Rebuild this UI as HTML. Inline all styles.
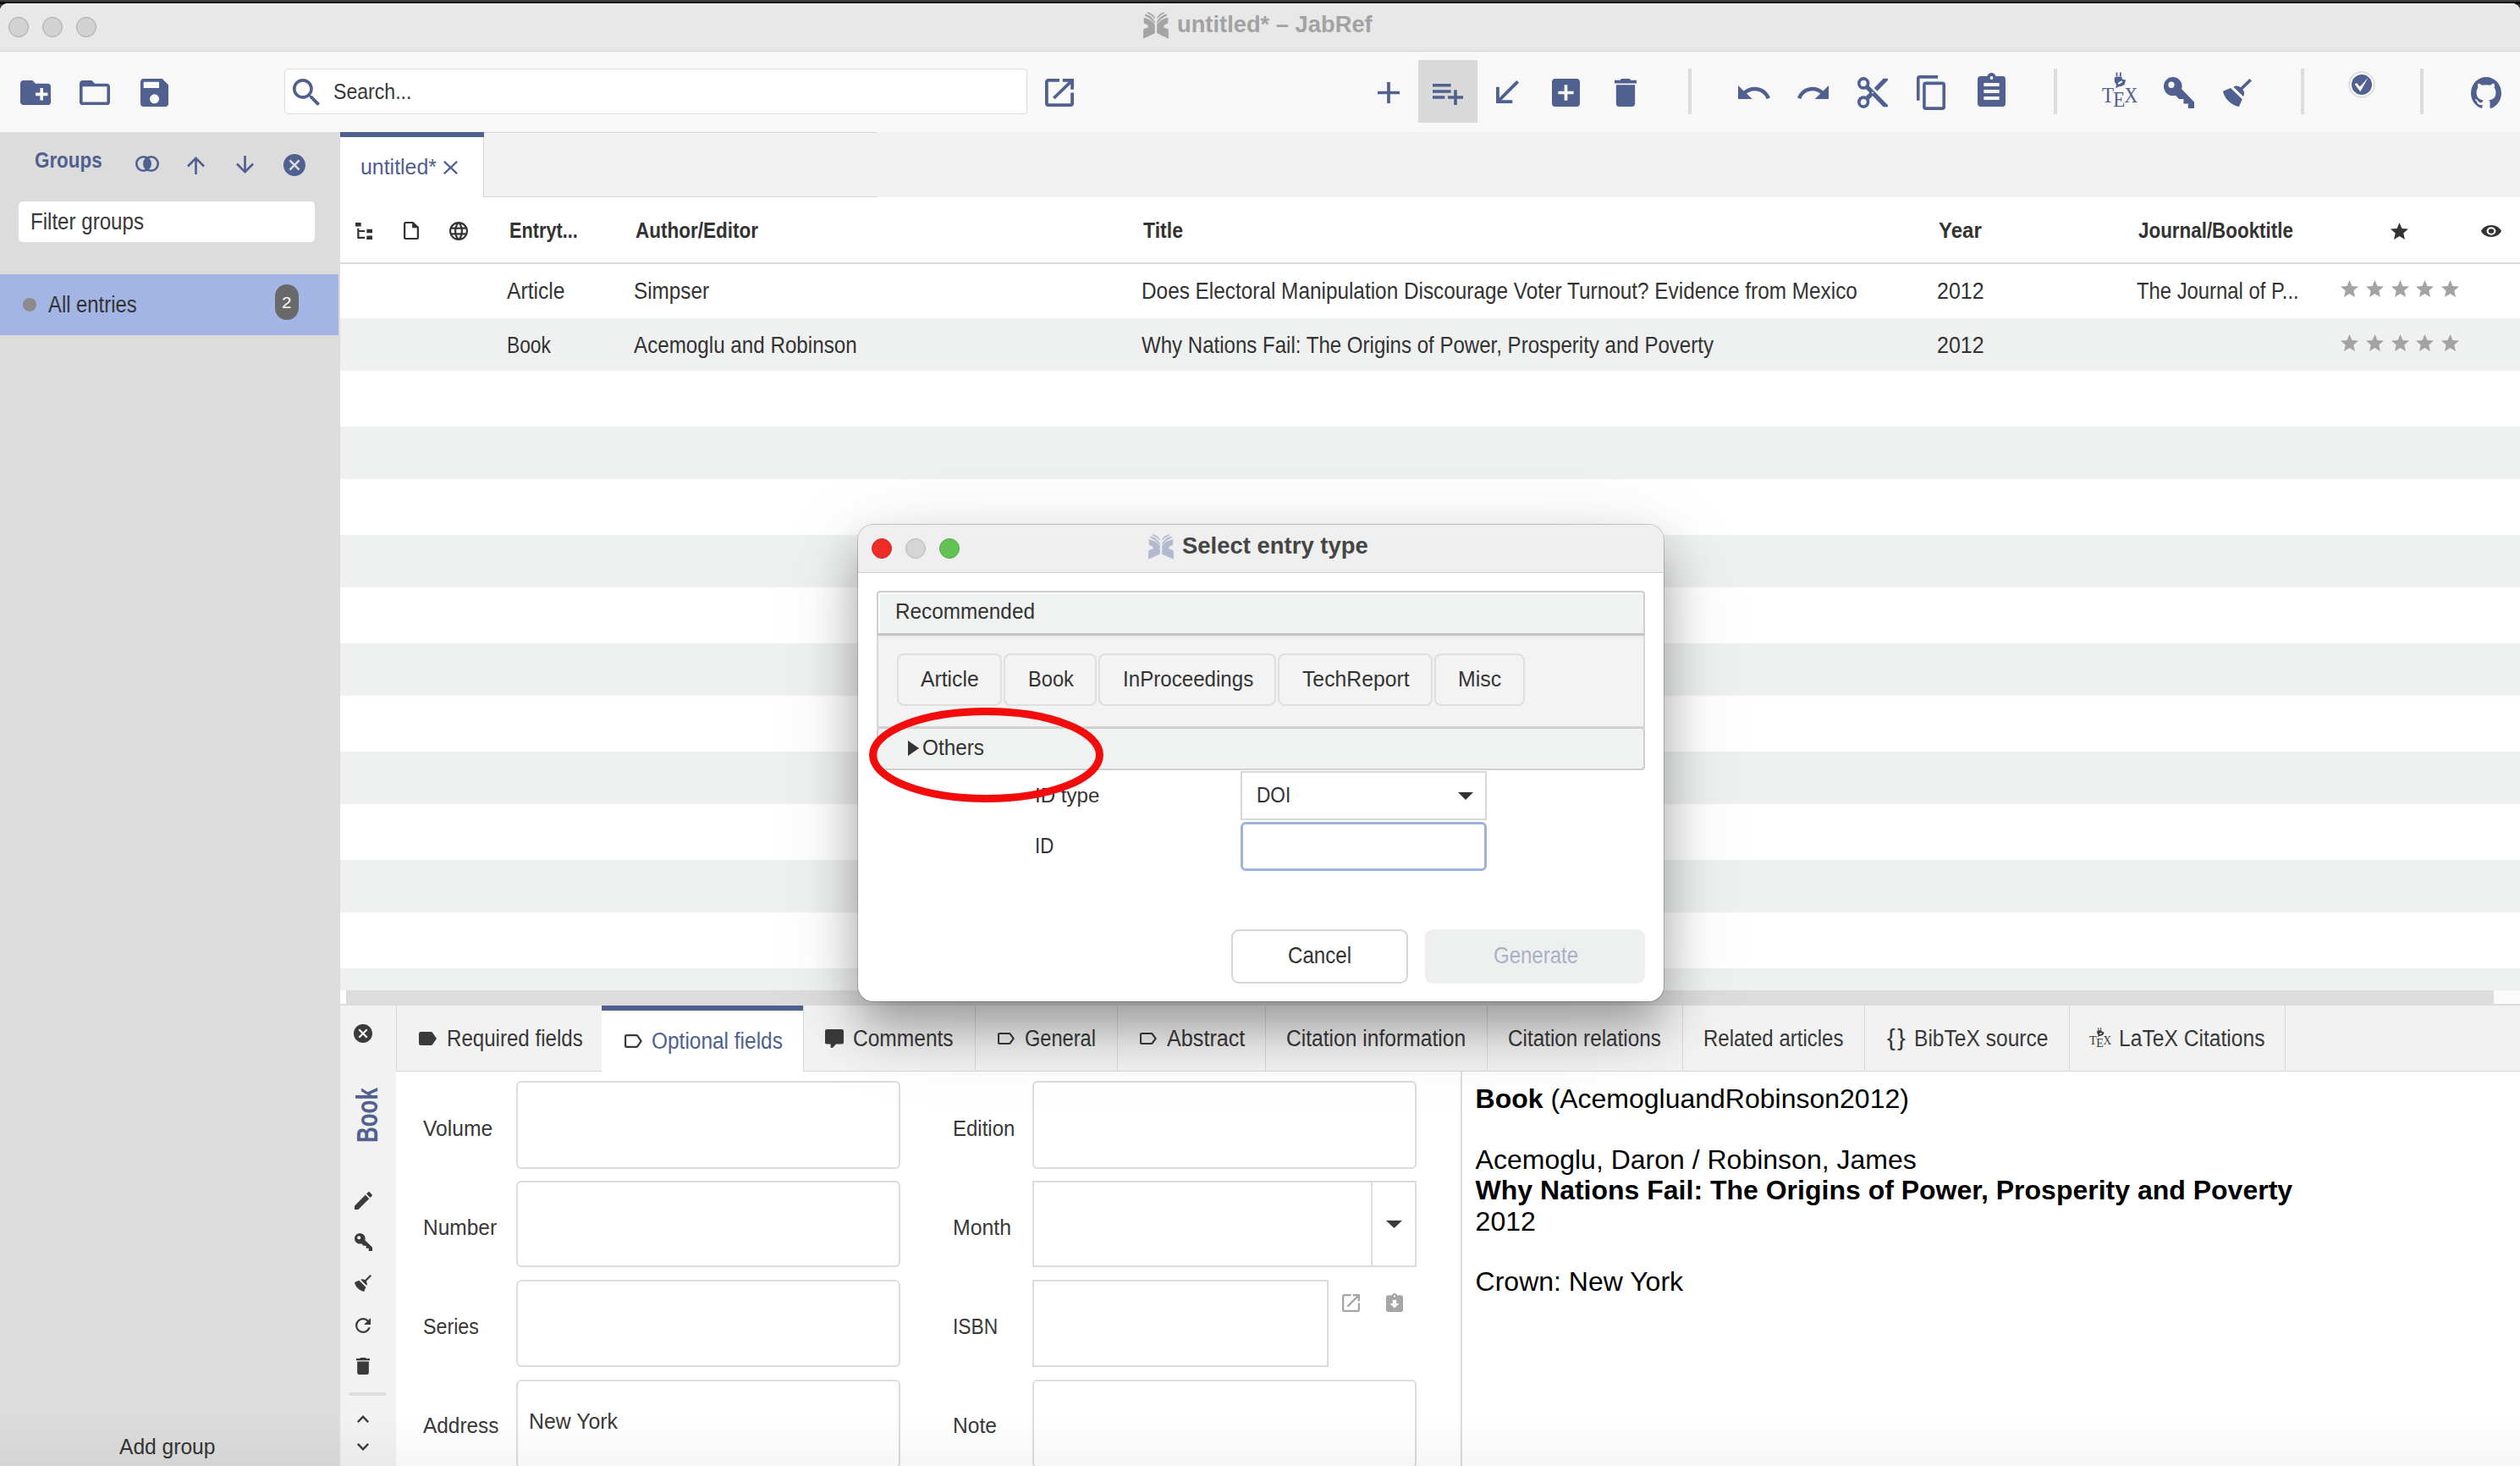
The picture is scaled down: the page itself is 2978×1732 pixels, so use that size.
<!DOCTYPE html>
<html><head><meta charset="utf-8">
<style>
*{box-sizing:border-box;margin:0;padding:0}
html,body{width:2978px;height:1732px;overflow:hidden;background:#3a3a3a;font-family:"Liberation Sans",sans-serif;color:#333}
.a{position:absolute}
.ic{position:absolute;overflow:visible}
.t{position:absolute;white-space:nowrap;line-height:1}
</style></head><body>

<div class="a" style="left:0px;top:0px;width:2978px;height:2px;background:#3d3d3d"></div>
<div class="a" style="left:0px;top:2px;width:2978px;height:3px;background:#0a0a0a"></div>
<div class="a" style="left:0px;top:4px;width:2978px;height:1728px;background:#f8f8f8;border-radius:9px 9px 0 0"></div>
<div class="a" style="left:0px;top:4px;width:2978px;height:56px;background:#e8e8e8;border-radius:9px 9px 0 0;border-top:1px solid #fdfdfd"></div>
<div class="a" style="left:0px;top:60px;width:2978px;height:1px;background:#d3d3d3"></div>
<div class="a" style="left:10px;top:20px;width:24px;height:24px;border-radius:50%;background:#d2d2d2;border:1px solid #a6a6a6"></div>
<div class="a" style="left:50px;top:20px;width:24px;height:24px;border-radius:50%;background:#d2d2d2;border:1px solid #a6a6a6"></div>
<div class="a" style="left:90px;top:20px;width:24px;height:24px;border-radius:50%;background:#d2d2d2;border:1px solid #a6a6a6"></div>
<svg class="ic" style="left:1351px;top:14px;width:30px;height:32px" viewBox="0 0 100 100" preserveAspectRatio="none"><g fill="#a4a4a4"><path d="M2,21 Q30,25 46,47 L46,79 L0,99 L1,63 L19,58 Q22,47 3,43 Z"/><path d="M8,8 Q32,13 46,36 L46,44 Q30,22 7,15 Z"/><path d="M16,1 Q36,5 46,20 L46,26 Q33,11 16,5 Z"/><g transform="translate(100,0) scale(-1,1)"><path d="M2,21 Q30,25 46,47 L46,79 L0,99 L1,63 L19,58 Q22,47 3,43 Z"/><path d="M8,8 Q32,13 46,36 L46,44 Q30,22 7,15 Z"/><path d="M16,1 Q36,5 46,20 L46,26 Q33,11 16,5 Z"/></g></g></svg>
<div class="t" style="left:1391.2px;top:14.0px;font-size:28.26px;color:#a2a2a2;font-weight:bold;transform:scaleX(0.9668);transform-origin:0 0;">untitled* – JabRef</div>
<svg class="ic" style="left:24px;top:95px;width:36px;height:29px" viewBox="2 4 20 16" preserveAspectRatio="none"><path fill="#50608f" d="M10,4L12,6H20A2,2 0 0,1 22,8V18A2,2 0 0,1 20,20H4C2.89,20 2,19.1 2,18V6C2,4.89 2.89,4 4,4H10M15,9V12H12V14H15V17H17V14H20V12H17V9H15Z"/></svg>
<svg class="ic" style="left:94px;top:95px;width:36px;height:29px" viewBox="2 4 20 16" preserveAspectRatio="none"><path fill="#50608f" d="M20,18H4V8H20M20,6H12L10,4H4C2.89,4 2,4.89 2,6V18A2,2 0 0,0 4,20H20A2,2 0 0,0 22,18V8C22,6.89 21.1,6 20,6Z"/></svg>
<svg class="ic" style="left:166px;top:93px;width:33px;height:33px" viewBox="3 3 18 18" preserveAspectRatio="none"><path fill="#50608f" d="M15,9H5V5H15M12,19A3,3 0 0,1 9,16A3,3 0 0,1 12,13A3,3 0 0,1 15,16A3,3 0 0,1 12,19M17,3H5C3.89,3 3,3.9 3,5V19A2,2 0 0,0 5,21H19A2,2 0 0,0 21,19V7L17,3Z"/></svg>
<div class="a" style="left:336px;top:81px;width:878px;height:54px;background:#fff;border:1.5px solid #dadada;border-radius:5px"></div>
<svg class="ic" style="left:346px;top:93px;width:32px;height:32px" viewBox="3 3 17.5 17.5" preserveAspectRatio="none"><path fill="#50608f" d="M9.5,3A6.5,6.5 0 0,1 16,9.5C16,11.11 15.41,12.59 14.44,13.73L14.71,14H15.5L20.5,19L19,20.5L14,15.5V14.71L13.73,14.44C12.59,15.41 11.11,16 9.5,16A6.5,6.5 0 0,1 3,9.5A6.5,6.5 0 0,1 9.5,3M9.5,5C7,5 5,7 5,9.5C5,12 7,14 9.5,14C12,14 14,12 14,9.5C14,7 12,5 9.5,5Z"/></svg>
<div class="t" style="left:394.0px;top:94.6px;font-size:26.23px;color:#383838;transform:scaleX(0.8810);transform-origin:0 0;">Search...</div>
<svg class="ic" style="left:1235px;top:93px;width:34px;height:33px" viewBox="3 3 18 18" preserveAspectRatio="none"><path fill="#50608f" d="M14,3V5H17.59L7.76,14.83L9.17,16.24L19,6.41V10H21V3M19,19H5V5H12V3H5C3.89,3 3,3.9 3,5V19A2,2 0 0,0 5,21H19A2,2 0 0,0 21,19V12H19V19Z"/></svg>
<svg class="ic" style="left:1628px;top:97px;width:26px;height:25px" viewBox="5 5 14 14" preserveAspectRatio="none"><path fill="#50608f" d="M19,13H13V19H11V13H5V11H11V5H13V11H19V13Z"/></svg>
<div class="a" style="left:1676px;top:71px;width:70px;height:74px;background:#d9d9d9"></div>
<svg class="ic" style="left:1693px;top:99px;width:36px;height:25px" viewBox="2 6 20 14" preserveAspectRatio="none"><path fill="#50608f" d="M2,16H10V14H2M18,14V10H16V14H12V16H16V20H18V16H22V14M14,6H2V8H14M14,10H2V12H14V10Z"/></svg>
<svg class="ic" style="left:1768px;top:95px;width:27px;height:27px" viewBox="5 5 14 14" preserveAspectRatio="none"><path fill="#50608f" d="M19,6.41L17.59,5L7,15.59V9H5V19H15V17H8.41L19,6.41Z"/></svg>
<svg class="ic" style="left:1834px;top:93px;width:33px;height:33px" viewBox="3 3 18 18" preserveAspectRatio="none"><path fill="#50608f" d="M17,13H13V17H11V13H7V11H11V7H13V11H17M19,3H5C3.89,3 3,3.89 3,5V19A2,2 0 0,0 5,21H19A2,2 0 0,0 21,19V5C21,3.89 20.1,3 19,3Z"/></svg>
<svg class="ic" style="left:1908px;top:93px;width:26px;height:33px" viewBox="5 3 14 18" preserveAspectRatio="none"><path fill="#50608f" d="M19,4H15.5L14.5,3H9.5L8.5,4H5V6H19M6,19A2,2 0 0,0 8,21H16A2,2 0 0,0 18,19V7H6V19Z"/></svg>
<div class="a" style="left:1995px;top:81px;width:4px;height:54px;background:#dcdcdc"></div>
<div class="a" style="left:2427px;top:81px;width:4px;height:54px;background:#dcdcdc"></div>
<div class="a" style="left:2719px;top:81px;width:4px;height:54px;background:#dcdcdc"></div>
<div class="a" style="left:2860px;top:81px;width:4px;height:54px;background:#dcdcdc"></div>
<svg class="ic" style="left:2054px;top:101px;width:38px;height:16px" viewBox="2 7 20.47 9" preserveAspectRatio="none"><path fill="#50608f" d="M12.5,8C9.85,8 7.45,9 5.6,10.6L2,7V16H11L7.38,12.38C8.77,11.22 10.54,10.5 12.5,10.5C16.04,10.5 19.05,12.81 20.1,16L22.47,15.22C21.08,11.03 17.15,8 12.5,8Z"/></svg>
<svg class="ic" style="left:2124px;top:101px;width:37px;height:16px" viewBox="1.54 7 20.46 9" preserveAspectRatio="none"><path fill="#50608f" d="M18.4,10.6C16.55,9 14.15,8 11.5,8C6.85,8 2.92,11.03 1.54,15.22L3.9,16C4.95,12.81 7.95,10.5 11.5,10.5C13.45,10.5 15.23,11.22 16.62,12.38L13,16H22V7L18.4,10.6Z"/></svg>
<svg class="ic" style="left:2195px;top:91px;width:36px;height:37px" viewBox="2 2 20 20" preserveAspectRatio="none"><path fill="#50608f" d="M19,3L13,9L15,11L22,4V3M12,12.5A0.5,0.5 0 0,1 11.5,12A0.5,0.5 0 0,1 12,11.5A0.5,0.5 0 0,1 12.5,12A0.5,0.5 0 0,1 12,12.5M6,20A2,2 0 0,1 4,18C4,16.89 4.9,16 6,16A2,2 0 0,1 8,18C8,19.11 7.1,20 6,20M6,8A2,2 0 0,1 4,6C4,4.89 4.9,4 6,4A2,2 0 0,1 8,6C8,7.11 7.1,8 6,8M9.64,7.64C9.87,7.14 10,6.590 10,6A4,4 0 0,0 6,2A4,4 0 0,0 2,6A4,4 0 0,0 6,10C6.59,10 7.14,9.87 7.64,9.64L10,12L7.64,14.36C7.14,14.13 6.59,14 6,14A4,4 0 0,0 2,18A4,4 0 0,0 6,22A4,4 0 0,0 10,18C10,17.41 9.87,16.86 9.64,16.36L12,14L19,21H22V20L9.64,7.64Z"/></svg>
<svg class="ic" style="left:2265px;top:89px;width:34px;height:41px" viewBox="2 1 19 22" preserveAspectRatio="none"><path fill="#50608f" d="M19,21H8V7H19M19,5H8A2,2 0 0,0 6,7V21A2,2 0 0,0 8,23H19A2,2 0 0,0 21,21V7A2,2 0 0,0 19,5M16,1H4A2,2 0 0,0 2,3V17H4V3H16V1Z"/></svg>
<svg class="ic" style="left:2337px;top:86px;width:33px;height:40px" viewBox="3 1 18 20" preserveAspectRatio="none"><path fill="#50608f" d="M17,9H7V7H17M17,13H7V11H17M17,17H7V15H17M12,3A1,1 0 0,1 13,4A1,1 0 0,1 12,5A1,1 0 0,1 11,4A1,1 0 0,1 12,3M19,3H14.82C14.4,1.84 13.3,1 12,1C10.7,1 9.6,1.84 9.18,3H5A2,2 0 0,0 3,5V19A2,2 0 0,0 5,21H19A2,2 0 0,0 21,19V5A2,2 0 0,0 19,3Z"/></svg>
<svg class="ic" style="left:2484px;top:85px;width:42px;height:42px" viewBox="0 0 43 42" preserveAspectRatio="none"><g fill="#50608f"><path fill-rule="evenodd" d="M17,0.5H18.8V5H17Z M21.5,0.5H23.3V5H21.5Z M15,8.5 Q15,5.5 18,5.5 L23.5,5.5 Q24.5,6.5 24.5,8.5 L28.8,9.5 L27.3,15 Q24,17.2 20,17.6 L16.8,19.2 L17.3,15 Q14.6,12 15,8.5 Z M19.3,14.2 Q21,15.2 24,12.5 Q25.5,10.8 24.5,10.5 Q22.5,10.2 20.3,12.3 Q18.6,13.9 19.3,14.2Z"/><text x="0" y="35.8" font-family="Liberation Serif" font-size="25.5" textLength="14.5" lengthAdjust="spacingAndGlyphs">T</text><text x="13.6" y="41" font-family="Liberation Serif" font-size="25.5" textLength="14.3" lengthAdjust="spacingAndGlyphs">E</text><text x="27.2" y="35.8" font-family="Liberation Serif" font-size="25.5" textLength="16" lengthAdjust="spacingAndGlyphs">X</text></g></svg>
<svg class="ic" style="left:2557px;top:91px;width:36px;height:37px" viewBox="2 2 20 20" preserveAspectRatio="none"><path fill="#50608f" d="M22,18V22H18V19H15V16H12L9.74,13.74C9.19,13.91 8.61,14 8,14A6,6 0 0,1 2,8A6,6 0 0,1 8,2A6,6 0 0,1 14,8C14,8.61 13.910,9.19 13.74,9.74L22,18M7,5A2,2 0 0,0 5,7A2,2 0 0,0 7,9A2,2 0 0,0 9,7A2,2 0 0,0 7,5Z"/></svg>
<svg class="ic" style="left:2627px;top:93px;width:34px;height:33px" viewBox="2.35 2.72 18.43 18.43" preserveAspectRatio="none"><path fill="#50608f" d="M19.36,2.72L20.78,4.14L15.06,9.85C16.13,11.39 16.28,13.24 15.38,14.44L9.06,8.12C10.26,7.22 12.11,7.37 13.65,8.44L19.36,2.72M5.93,17.57C3.92,15.56 2.69,13.16 2.35,10.92L7.23,8.83L14.67,16.27L12.58,21.15C10.34,20.81 7.94,19.58 5.93,17.57Z"/></svg>
<svg class="ic" style="left:2775px;top:84px;width:32px;height:32px" viewBox="0 0 32 32"><circle cx="16" cy="16" r="14.8" fill="#fff" stroke="#e0e0e0" stroke-width="2.2"/><circle cx="16" cy="16" r="12" fill="#50608f"/><path fill="#fff" d="M7.6,15.6 L10.1,13.9 L13.7,18.4 L23.4,8.1 Q20,14 14.3,24.3 Z"/></svg>
<svg class="ic" style="left:2920px;top:91px;width:36px;height:37px" viewBox="2 2 20 19.6" preserveAspectRatio="none"><path fill="#50608f" d="M12,2A10,10 0 0,0 2,12C2,16.42 4.87,20.17 8.84,21.5C9.34,21.58 9.5,21.27 9.5,21C9.5,20.77 9.5,20.14 9.5,19.31C6.73,19.91 6.14,17.97 6.14,17.97C5.68,16.81 5.03,16.5 5.03,16.5C4.12,15.88 5.1,15.9 5.1,15.9C6.1,15.97 6.63,16.930 6.63,16.93C7.5,18.45 8.97,18 9.54,17.76C9.63,17.11 9.89,16.67 10.17,16.42C7.95,16.17 5.64,15.31 5.64,11.5C5.64,10.39 6,9.5 6.65,8.79C6.55,8.54 6.2,7.5 6.75,6.15C6.75,6.15 7.59,5.88 9.5,7.17C10.29,6.95 11.15,6.84 12,6.84C12.85,6.84 13.71,6.95 14.5,7.17C16.41,5.88 17.25,6.15 17.25,6.15C17.8,7.5 17.45,8.54 17.35,8.79C18,9.5 18.36,10.39 18.36,11.5C18.36,15.32 16.04,16.16 13.81,16.41C14.17,16.72 14.5,17.33 14.5,18.26C14.5,19.6 14.5,20.68 14.5,21.090C14.5,21.36 14.66,21.68 15.17,21.58C19.14,20.24 22,16.42 22,12A10,10 0 0,0 12,2Z"/></svg>
<div class="a" style="left:0px;top:156px;width:402px;height:1576px;background:#dcdcdc"></div>
<div class="t" style="left:41.4px;top:176.1px;font-size:26.09px;color:#50608f;font-weight:bold;transform:scaleX(0.8583);transform-origin:0 0;">Groups</div>
<svg class="ic" style="left:160px;top:183px;width:28px;height:21px" viewBox="0 0 28 21"><g fill="none" stroke="#50608f" stroke-width="2.6"><circle cx="9.5" cy="10.5" r="8.2"/><circle cx="18.5" cy="10.5" r="8.2"/></g><path fill="#50608f" d="M14,3.6 A8.2,8.2 0 0 1 14,17.4 A8.2,8.2 0 0 1 14,3.6Z"/></svg>
<svg class="ic" style="left:221px;top:185px;width:21px;height:21px" viewBox="4.08 4.16 15.840000000000002 15.84" preserveAspectRatio="none"><path fill="#50608f" d="M13,20H11V8L5.5,13.5L4.08,12.08L12,4.16L19.92,12.08L18.5,13.5L13,8V20Z"/></svg>
<svg class="ic" style="left:279px;top:184px;width:21px;height:21px" viewBox="4.08 4 15.840000000000002 15.84" preserveAspectRatio="none"><path fill="#50608f" d="M11,4H13V16L18.5,10.5L19.92,11.92L12,19.84L4.08,11.92L5.5,10.5L11,16V4Z"/></svg>
<svg class="ic" style="left:335px;top:182px;width:26px;height:26px" viewBox="2 2 20 20" preserveAspectRatio="none"><path fill="#50608f" d="M12,2C17.53,2 22,6.47 22,12C22,17.53 17.53,22 12,22C6.47,22 2,17.53 2,12C2,6.47 6.47,2 12,2M15.59,7L12,10.59L8.41,7L7,8.41L10.59,12L7,15.59L8.41,17L12,13.41L15.59,17L17,15.59L13.410,12L17,8.41L15.59,7Z"/></svg>
<div class="a" style="left:22px;top:238px;width:350px;height:48px;background:#fff;border-radius:5px"></div>
<div class="t" style="left:36.0px;top:248.0px;font-size:27.39px;color:#383838;transform:scaleX(0.8803);transform-origin:0 0;">Filter groups</div>
<div class="a" style="left:0px;top:324px;width:400px;height:72px;background:#a3b5e5"></div>
<div class="a" style="left:27px;top:352px;width:16px;height:16px;border-radius:50%;background:#8c8a8c"></div>
<div class="t" style="left:57.3px;top:346.1px;font-size:27.39px;color:#333;transform:scaleX(0.8707);transform-origin:0 0;">All entries</div>
<div class="a" style="left:325px;top:336px;width:28px;height:42px;border-radius:14px;background:#696969"></div>
<div class="t" style="left:333.0px;top:349.1px;font-size:18.12px;color:#fff;transform:scaleX(1.1438);transform-origin:0 0;">2</div>
<div class="t" style="left:140.9px;top:1696.2px;font-size:26.67px;color:#333;transform:scaleX(0.9223);transform-origin:0 0;">Add group</div>
<div class="a" style="left:402px;top:156px;width:2576px;height:77px;background:#f2f2f2"></div>
<div class="a" style="left:402px;top:156px;width:634px;height:1px;background:#d6d6d6"></div>
<div class="a" style="left:402px;top:232px;width:634px;height:1px;background:#d6d6d6"></div>
<div class="a" style="left:402px;top:156px;width:170px;height:77px;background:#fff;border-right:1px solid #d6d6d6"></div>
<div class="a" style="left:402px;top:156px;width:170px;height:6px;background:#50608f"></div>
<div class="t" style="left:426.0px;top:185.3px;font-size:25.50px;color:#50608f;transform:scaleX(0.9763);transform-origin:0 0;">untitled*</div>
<svg class="ic" style="left:524px;top:190px;width:17px;height:16px" viewBox="5 5 14 14" preserveAspectRatio="none"><path fill="#50608f" d="M19,6.41L17.59,5L12,10.59L6.41,5L5,6.41L10.59,12L5,17.59L6.41,19L12,13.41L17.59,19L19,17.59L13.41,12L19,6.41Z"/></svg>
<div class="a" style="left:402px;top:233px;width:2576px;height:937px;background:#fff"></div>
<div class="a" style="left:402px;top:310px;width:2576px;height:2px;background:#dadada"></div>
<div class="a" style="left:402px;top:376px;width:2576px;height:62px;background:#eff0f0"></div>
<div class="a" style="left:402px;top:504px;width:2576px;height:62px;background:#eff0f0"></div>
<div class="a" style="left:402px;top:632px;width:2576px;height:62px;background:#eff0f0"></div>
<div class="a" style="left:402px;top:760px;width:2576px;height:62px;background:#eff0f0"></div>
<div class="a" style="left:402px;top:888px;width:2576px;height:62px;background:#eff0f0"></div>
<div class="a" style="left:402px;top:1016px;width:2576px;height:62px;background:#eff0f0"></div>
<div class="a" style="left:402px;top:1144px;width:2576px;height:26px;background:#eff0f0"></div>
<svg class="ic" style="left:420px;top:263px;width:20px;height:20px" viewBox="3 3 18 18" preserveAspectRatio="none"><path fill="#333" d="M3,3H9V7H3V3M15,10H21V14H15V10M15,17H21V21H15V17M13,13H7V18H13V20H7L5,20V9H7V11H13V13Z"/></svg>
<svg class="ic" style="left:477px;top:262px;width:18px;height:21px" viewBox="4 2 16 20" preserveAspectRatio="none"><path fill="#333" d="M14,2H6A2,2 0 0,0 4,4V20A2,2 0 0,0 6,22H18A2,2 0 0,0 20,20V8L14,2M18,20H6V4H13V9H18V20Z"/></svg>
<svg class="ic" style="left:531px;top:262px;width:22px;height:22px" viewBox="2 2 20 20" preserveAspectRatio="none"><path fill="#333" d="M16.36,14C16.44,13.34 16.5,12.68 16.5,12C16.5,11.32 16.44,10.66 16.36,10H19.74C19.9,10.64 20,11.31 20,12C20,12.69 19.9,13.36 19.74,14M14.59,19.56C15.19,18.45 15.65,17.25 15.97,16H18.92C17.96,17.65 16.43,18.93 14.59,19.56M14.34,14H9.66C9.56,13.34 9.5,12.68 9.5,12C9.5,11.32 9.56,10.65 9.66,10H14.34C14.43,10.65 14.5,11.32 14.5,12C14.5,12.68 14.43,13.34 14.34,14M12,19.96C11.17,18.76 10.5,17.43 10.09,16H13.91C13.5,17.43 12.83,18.76 12,19.96M8,8H5.08C6.03,6.34 7.57,5.06 9.4,4.44C8.8,5.55 8.35,6.75 8,8M5.08,16H8C8.35,17.25 8.8,18.45 9.4,19.56C7.57,18.93 6.03,17.65 5.08,16M4.26,14C4.1,13.36 4,12.69 4,12C4,11.31 4.1,10.64 4.26,10H7.64C7.56,10.66 7.5,11.32 7.5,12C7.5,12.68 7.56,13.34 7.64,14M12,4.03C12.83,5.23 13.5,6.57 13.91,8H10.09C10.5,6.57 11.17,5.23 12,4.03M18.92,8H15.97C15.65,6.75 15.19,5.55 14.59,4.44C16.43,5.07 17.96,6.34 18.92,8M12,2C6.47,2 2,6.5 2,12A10,10 0 0,0 12,22A10,10 0 0,0 22,12A10,10 0 0,0 12,2Z"/></svg>
<div class="t" style="left:601.6px;top:259.4px;font-size:26.23px;color:#333;font-weight:bold;transform:scaleX(0.8285);transform-origin:0 0;">Entryt...</div>
<div class="t" style="left:751.0px;top:259.4px;font-size:26.23px;color:#333;font-weight:bold;transform:scaleX(0.8580);transform-origin:0 0;">Author/Editor</div>
<div class="t" style="left:1351.0px;top:259.4px;font-size:26.23px;color:#333;font-weight:bold;transform:scaleX(0.8794);transform-origin:0 0;">Title</div>
<div class="t" style="left:2291.0px;top:259.4px;font-size:26.23px;color:#333;font-weight:bold;transform:scaleX(0.9167);transform-origin:0 0;">Year</div>
<div class="t" style="left:2527.0px;top:259.4px;font-size:26.23px;color:#333;font-weight:bold;transform:scaleX(0.8541);transform-origin:0 0;">Journal/Booktitle</div>
<svg class="ic" style="left:2825px;top:263px;width:21px;height:20px" viewBox="2 2 20 19" preserveAspectRatio="none"><path fill="#333" d="M12,17.27L18.18,21L16.54,13.97L22,9.24L14.81,8.62L12,2L9.19,8.62L2,9.24L7.45,13.97L5.82,21L12,17.27Z"/></svg>
<svg class="ic" style="left:2932px;top:266px;width:24px;height:14px" viewBox="1 4.5 22 15.0" preserveAspectRatio="none"><path fill="#333" d="M12,9A3,3 0 0,0 9,12A3,3 0 0,0 12,15A3,3 0 0,0 15,12A3,3 0 0,0 12,9M12,17A5,5 0 0,1 7,12A5,5 0 0,1 12,7A5,5 0 0,1 17,12A5,5 0 0,1 12,17M12,4.5C7,4.5 2.73,7.61 1,12C2.73,16.39 7,19.5 12,19.5C17,19.5 21.27,16.39 23,12C21.27,7.61 17,4.5 12,4.5Z"/></svg>
<div class="t" style="left:599.0px;top:330.3px;font-size:27.54px;color:#333;transform:scaleX(0.8956);transform-origin:0 0;">Article</div>
<div class="t" style="left:749.0px;top:330.3px;font-size:27.54px;color:#333;transform:scaleX(0.8813);transform-origin:0 0;">Simpser</div>
<div class="t" style="left:1349.0px;top:330.3px;font-size:27.54px;color:#333;transform:scaleX(0.8844);transform-origin:0 0;">Does Electoral Manipulation Discourage Voter Turnout? Evidence from Mexico</div>
<div class="t" style="left:2289.0px;top:330.3px;font-size:27.54px;color:#333;transform:scaleX(0.9075);transform-origin:0 0;">2012</div>
<div class="t" style="left:2525.0px;top:330.3px;font-size:27.54px;color:#333;transform:scaleX(0.8656);transform-origin:0 0;">The Journal of P...</div>
<div class="t" style="left:599.0px;top:394.7px;font-size:26.96px;color:#333;transform:scaleX(0.8451);transform-origin:0 0;">Book</div>
<div class="t" style="left:749.0px;top:394.7px;font-size:26.96px;color:#333;transform:scaleX(0.8977);transform-origin:0 0;">Acemoglu and Robinson</div>
<div class="t" style="left:1349.0px;top:394.7px;font-size:26.96px;color:#333;transform:scaleX(0.8923);transform-origin:0 0;">Why Nations Fail: The Origins of Power, Prosperity and Poverty</div>
<div class="t" style="left:2289.0px;top:394.7px;font-size:26.96px;color:#333;transform:scaleX(0.9270);transform-origin:0 0;">2012</div>
<svg class="ic" style="left:2766.0px;top:331px;width:21.0px;height:20px" viewBox="2 2 20 19" preserveAspectRatio="none"><path fill="#a3a3a3" d="M12,17.27L18.18,21L16.54,13.97L22,9.24L14.81,8.62L12,2L9.19,8.62L2,9.24L7.45,13.97L5.82,21L12,17.27Z"/></svg>
<svg class="ic" style="left:2795.8px;top:331px;width:21.0px;height:20px" viewBox="2 2 20 19" preserveAspectRatio="none"><path fill="#a3a3a3" d="M12,17.27L18.18,21L16.54,13.97L22,9.24L14.81,8.62L12,2L9.19,8.62L2,9.24L7.45,13.97L5.82,21L12,17.27Z"/></svg>
<svg class="ic" style="left:2825.6px;top:331px;width:21.0px;height:20px" viewBox="2 2 20 19" preserveAspectRatio="none"><path fill="#a3a3a3" d="M12,17.27L18.18,21L16.54,13.97L22,9.24L14.81,8.62L12,2L9.19,8.62L2,9.24L7.45,13.97L5.82,21L12,17.27Z"/></svg>
<svg class="ic" style="left:2855.4px;top:331px;width:21.0px;height:20px" viewBox="2 2 20 19" preserveAspectRatio="none"><path fill="#a3a3a3" d="M12,17.27L18.18,21L16.54,13.97L22,9.24L14.81,8.62L12,2L9.19,8.62L2,9.24L7.45,13.97L5.82,21L12,17.27Z"/></svg>
<svg class="ic" style="left:2885.2px;top:331px;width:21.0px;height:20px" viewBox="2 2 20 19" preserveAspectRatio="none"><path fill="#a3a3a3" d="M12,17.27L18.18,21L16.54,13.97L22,9.24L14.81,8.62L12,2L9.19,8.62L2,9.24L7.45,13.97L5.82,21L12,17.27Z"/></svg>
<svg class="ic" style="left:2766.0px;top:395px;width:21.0px;height:20px" viewBox="2 2 20 19" preserveAspectRatio="none"><path fill="#a3a3a3" d="M12,17.27L18.18,21L16.54,13.97L22,9.24L14.81,8.62L12,2L9.19,8.62L2,9.24L7.45,13.97L5.82,21L12,17.27Z"/></svg>
<svg class="ic" style="left:2795.8px;top:395px;width:21.0px;height:20px" viewBox="2 2 20 19" preserveAspectRatio="none"><path fill="#a3a3a3" d="M12,17.27L18.18,21L16.54,13.97L22,9.24L14.81,8.62L12,2L9.19,8.62L2,9.24L7.45,13.97L5.82,21L12,17.27Z"/></svg>
<svg class="ic" style="left:2825.6px;top:395px;width:21.0px;height:20px" viewBox="2 2 20 19" preserveAspectRatio="none"><path fill="#a3a3a3" d="M12,17.27L18.18,21L16.54,13.97L22,9.24L14.81,8.62L12,2L9.19,8.62L2,9.24L7.45,13.97L5.82,21L12,17.27Z"/></svg>
<svg class="ic" style="left:2855.4px;top:395px;width:21.0px;height:20px" viewBox="2 2 20 19" preserveAspectRatio="none"><path fill="#a3a3a3" d="M12,17.27L18.18,21L16.54,13.97L22,9.24L14.81,8.62L12,2L9.19,8.62L2,9.24L7.45,13.97L5.82,21L12,17.27Z"/></svg>
<svg class="ic" style="left:2885.2px;top:395px;width:21.0px;height:20px" viewBox="2 2 20 19" preserveAspectRatio="none"><path fill="#a3a3a3" d="M12,17.27L18.18,21L16.54,13.97L22,9.24L14.81,8.62L12,2L9.19,8.62L2,9.24L7.45,13.97L5.82,21L12,17.27Z"/></svg>
<div class="a" style="left:402px;top:1170px;width:2576px;height:18px;background:#dcdcdc"></div>
<div class="a" style="left:402px;top:1170px;width:7px;height:16px;background:#fff"></div>
<div class="a" style="left:2947px;top:1170px;width:31px;height:16px;background:#fafafa"></div>
<div class="a" style="left:402px;top:1188px;width:2576px;height:544px;background:#fff"></div>
<div class="a" style="left:402px;top:1188px;width:66px;height:544px;background:#f2f2f2"></div>
<div class="a" style="left:468px;top:1188px;width:2510px;height:78px;background:#f2f2f2;border-bottom:1px solid #d6d6d6"></div>
<div class="a" style="left:468px;top:1188px;width:1px;height:78px;background:#d9d9d9"></div>
<div class="a" style="left:711px;top:1188px;width:1px;height:78px;background:#d9d9d9"></div>
<div class="a" style="left:949px;top:1188px;width:1px;height:78px;background:#d9d9d9"></div>
<div class="a" style="left:1152px;top:1188px;width:1px;height:78px;background:#d9d9d9"></div>
<div class="a" style="left:1320px;top:1188px;width:1px;height:78px;background:#d9d9d9"></div>
<div class="a" style="left:1495px;top:1188px;width:1px;height:78px;background:#d9d9d9"></div>
<div class="a" style="left:1757px;top:1188px;width:1px;height:78px;background:#d9d9d9"></div>
<div class="a" style="left:1988px;top:1188px;width:1px;height:78px;background:#d9d9d9"></div>
<div class="a" style="left:2203px;top:1188px;width:1px;height:78px;background:#d9d9d9"></div>
<div class="a" style="left:2445px;top:1188px;width:1px;height:78px;background:#d9d9d9"></div>
<div class="a" style="left:2700px;top:1188px;width:1px;height:78px;background:#d9d9d9"></div>
<div class="a" style="left:711px;top:1188px;width:238px;height:78px;background:#fff"></div>
<div class="a" style="left:711px;top:1188px;width:238px;height:6px;background:#50608f"></div>
<svg class="ic" style="left:418px;top:1210px;width:22px;height:22px" viewBox="2 2 20 20" preserveAspectRatio="none"><path fill="#3a3a3a" d="M12,2C17.53,2 22,6.47 22,12C22,17.53 17.53,22 12,22C6.47,22 2,17.53 2,12C2,6.47 6.47,2 12,2M15.59,7L12,10.59L8.41,7L7,8.41L10.59,12L7,15.59L8.41,17L12,13.41L15.59,17L17,15.59L13.410,12L17,8.41L15.59,7Z"/></svg>
<svg class="ic" style="left:495px;top:1219px;width:21px;height:16px" viewBox="3 5 19 14" preserveAspectRatio="none"><path fill="#3a3a3a" d="M17.63,5.84C17.27,5.33 16.67,5 16,5H5A2,2 0 0,0 3,7V17A2,2 0 0,0 5,19H16C16.67,19 17.27,18.66 17.63,18.15L22,12L17.63,5.84Z"/></svg>
<div class="t" style="left:527.5px;top:1212.8px;font-size:27.39px;color:#383838;transform:scaleX(0.8801);transform-origin:0 0;">Required fields</div>
<svg class="ic" style="left:738px;top:1222px;width:21px;height:16px" viewBox="3 5 19 14" preserveAspectRatio="none"><path fill="#3a3a3a" d="M16,17H5V7H16L19.55,12M17.63,5.84C17.27,5.33 16.67,5 16,5H5A2,2 0 0,0 3,7V17A2,2 0 0,0 5,19H16C16.67,19 17.27,18.66 17.63,18.15L22,12L17.63,5.84Z"/></svg>
<div class="t" style="left:770.3px;top:1215.6px;font-size:27.39px;color:#50608f;transform:scaleX(0.8929);transform-origin:0 0;">Optional fields</div>
<svg class="ic" style="left:975px;top:1216px;width:22px;height:22px" viewBox="2 2 20 20" preserveAspectRatio="none"><path fill="#3a3a3a" d="M9,22A1,1 0 0,1 8,21V18H4A2,2 0 0,1 2,16V4C2,2.89 2.9,2 4,2H20A2,2 0 0,1 22,4V16A2,2 0 0,1 20,18H13.9L10.2,21.71C10,21.9 9.75,22 9.5,22V22H9Z"/></svg>
<div class="t" style="left:1008.0px;top:1212.8px;font-size:27.39px;color:#383838;transform:scaleX(0.8963);transform-origin:0 0;">Comments</div>
<svg class="ic" style="left:1179px;top:1220px;width:20px;height:14px" viewBox="3 5 19 14" preserveAspectRatio="none"><path fill="#3a3a3a" d="M16,17H5V7H16L19.55,12M17.63,5.84C17.27,5.33 16.67,5 16,5H5A2,2 0 0,0 3,7V17A2,2 0 0,0 5,19H16C16.67,19 17.27,18.66 17.63,18.15L22,12L17.63,5.84Z"/></svg>
<div class="t" style="left:1211.0px;top:1212.8px;font-size:27.39px;color:#383838;transform:scaleX(0.8620);transform-origin:0 0;">General</div>
<svg class="ic" style="left:1347px;top:1220px;width:20px;height:14px" viewBox="3 5 19 14" preserveAspectRatio="none"><path fill="#3a3a3a" d="M16,17H5V7H16L19.55,12M17.63,5.84C17.27,5.33 16.67,5 16,5H5A2,2 0 0,0 3,7V17A2,2 0 0,0 5,19H16C16.67,19 17.27,18.66 17.63,18.15L22,12L17.63,5.84Z"/></svg>
<div class="t" style="left:1379.0px;top:1212.8px;font-size:27.39px;color:#383838;transform:scaleX(0.9198);transform-origin:0 0;">Abstract</div>
<div class="t" style="left:1520.3px;top:1212.8px;font-size:27.39px;color:#383838;transform:scaleX(0.8992);transform-origin:0 0;">Citation information</div>
<div class="t" style="left:1782.0px;top:1212.8px;font-size:27.39px;color:#383838;transform:scaleX(0.8873);transform-origin:0 0;">Citation relations</div>
<div class="t" style="left:2012.8px;top:1212.8px;font-size:27.39px;color:#383838;transform:scaleX(0.8766);transform-origin:0 0;">Related articles</div>
<div class="t" style="left:2230.0px;top:1213.2px;font-size:26.96px;color:#383838;transform:scaleX(1.0948);transform-origin:0 0;letter-spacing:2px;">{}</div>
<div class="t" style="left:2262.0px;top:1212.8px;font-size:27.39px;color:#383838;transform:scaleX(0.8980);transform-origin:0 0;">BibTeX source</div>
<svg class="ic" style="left:2469px;top:1214px;width:26px;height:24px" viewBox="0 0 43 42" preserveAspectRatio="none"><g fill="#3a3a3a"><path fill-rule="evenodd" d="M17,0.5H18.8V5H17Z M21.5,0.5H23.3V5H21.5Z M15,8.5 Q15,5.5 18,5.5 L23.5,5.5 Q24.5,6.5 24.5,8.5 L28.8,9.5 L27.3,15 Q24,17.2 20,17.6 L16.8,19.2 L17.3,15 Q14.6,12 15,8.5 Z M19.3,14.2 Q21,15.2 24,12.5 Q25.5,10.8 24.5,10.5 Q22.5,10.2 20.3,12.3 Q18.6,13.9 19.3,14.2Z"/><text x="0" y="35.8" font-family="Liberation Serif" font-size="25.5" textLength="14.5" lengthAdjust="spacingAndGlyphs">T</text><text x="13.6" y="41" font-family="Liberation Serif" font-size="25.5" textLength="14.3" lengthAdjust="spacingAndGlyphs">E</text><text x="27.2" y="35.8" font-family="Liberation Serif" font-size="25.5" textLength="16" lengthAdjust="spacingAndGlyphs">X</text></g></svg>
<div class="t" style="left:2504.4px;top:1212.8px;font-size:27.39px;color:#383838;transform:scaleX(0.8995);transform-origin:0 0;">LaTeX Citations</div>
<div class="t" style="left:417.4px;top:1350.0px;font-size:34.78px;font-weight:bold;color:#50608f;transform:rotate(-90deg) scaleX(0.7468);transform-origin:0 0;">Book</div>
<svg class="ic" style="left:419px;top:1408px;width:21px;height:21px" viewBox="3 2.9 18.1 18.1" preserveAspectRatio="none"><path fill="#3a3a3a" d="M20.71,7.04C21.1,6.65 21.1,6 20.71,5.63L18.37,3.29C18,2.9 17.35,2.9 16.96,3.29L15.12,5.12L18.87,8.87M3,17.25V21H6.75L17.81,9.93L14.06,6.18L3,17.25Z"/></svg>
<svg class="ic" style="left:419px;top:1457px;width:21px;height:21px" viewBox="2 2 20 20" preserveAspectRatio="none"><path fill="#3a3a3a" d="M22,18V22H18V19H15V16H12L9.74,13.74C9.19,13.91 8.61,14 8,14A6,6 0 0,1 2,8A6,6 0 0,1 8,2A6,6 0 0,1 14,8C14,8.61 13.910,9.19 13.74,9.74L22,18M7,5A2,2 0 0,0 5,7A2,2 0 0,0 7,9A2,2 0 0,0 9,7A2,2 0 0,0 7,5Z"/></svg>
<svg class="ic" style="left:419px;top:1506px;width:20px;height:20px" viewBox="2.35 2.72 18.43 18.43" preserveAspectRatio="none"><path fill="#3a3a3a" d="M19.36,2.72L20.78,4.14L15.06,9.85C16.13,11.39 16.28,13.24 15.38,14.44L9.06,8.12C10.26,7.22 12.11,7.37 13.65,8.44L19.36,2.72M5.93,17.57C3.92,15.56 2.69,13.16 2.35,10.92L7.23,8.83L14.67,16.27L12.58,21.15C10.34,20.81 7.94,19.58 5.93,17.57Z"/></svg>
<svg class="ic" style="left:420px;top:1557px;width:18px;height:18px" viewBox="4 4 16 16" preserveAspectRatio="none"><path fill="#3a3a3a" d="M17.65,6.35C16.2,4.9 14.21,4 12,4A8,8 0 0,0 4,12A8,8 0 0,0 12,20C15.73,20 18.84,17.45 19.73,14H17.65C16.83,16.33 14.61,18 12,18A6,6 0 0,1 6,12A6,6 0 0,1 12,6C13.66,6 15.14,6.69 16.22,7.78L13,11H20V4L17.65,6.35Z"/></svg>
<svg class="ic" style="left:421px;top:1604px;width:16px;height:20px" viewBox="5 3 14 18" preserveAspectRatio="none"><path fill="#3a3a3a" d="M19,4H15.5L14.5,3H9.5L8.5,4H5V6H19M6,19A2,2 0 0,0 8,21H16A2,2 0 0,0 18,19V7H6V19Z"/></svg>
<div class="a" style="left:413px;top:1645px;width:43px;height:4px;background:#dcdcdc"></div>
<svg class="ic" style="left:422px;top:1672px;width:14px;height:9px" viewBox="6 8 12 7.41" preserveAspectRatio="none"><path fill="#3a3a3a" d="M7.41,15.41L12,10.83L16.59,15.41L18,14L12,8L6,14L7.41,15.41Z"/></svg>
<svg class="ic" style="left:422px;top:1705px;width:14px;height:9px" viewBox="6 8.58 12 7.42" preserveAspectRatio="none"><path fill="#3a3a3a" d="M7.41,8.58L12,13.17L16.59,8.58L18,10L12,16L6,10L7.41,8.58Z"/></svg>
<div class="a" style="left:610px;top:1277px;width:454px;height:104px;background:#fff;border:2px solid #dcdcdc;border-radius:6px"></div>
<div class="t" style="left:499.5px;top:1320.2px;font-size:26.09px;color:#383838;transform:scaleX(0.9460);transform-origin:0 0;">Volume</div>
<div class="t" style="left:1126.3px;top:1320.2px;font-size:26.09px;color:#383838;transform:scaleX(0.9203);transform-origin:0 0;">Edition</div>
<div class="a" style="left:610px;top:1395px;width:454px;height:102px;background:#fff;border:2px solid #dcdcdc;border-radius:6px"></div>
<div class="t" style="left:499.5px;top:1437.9px;font-size:25.65px;color:#383838;transform:scaleX(0.9555);transform-origin:0 0;">Number</div>
<div class="t" style="left:1126.3px;top:1437.9px;font-size:25.65px;color:#383838;transform:scaleX(0.9690);transform-origin:0 0;">Month</div>
<div class="a" style="left:610px;top:1512px;width:454px;height:103px;background:#fff;border:2px solid #dcdcdc;border-radius:6px"></div>
<div class="t" style="left:499.5px;top:1553.8px;font-size:26.09px;color:#383838;transform:scaleX(0.8911);transform-origin:0 0;">Series</div>
<div class="t" style="left:1126.3px;top:1553.8px;font-size:26.09px;color:#383838;transform:scaleX(0.8767);transform-origin:0 0;">ISBN</div>
<div class="a" style="left:610px;top:1630px;width:454px;height:105px;background:#fff;border:2px solid #dcdcdc;border-radius:6px"></div>
<div class="t" style="left:499.5px;top:1671.6px;font-size:24.93px;color:#383838;transform:scaleX(0.9790);transform-origin:0 0;">Address</div>
<div class="t" style="left:1126.3px;top:1671.6px;font-size:24.93px;color:#383838;transform:scaleX(0.9856);transform-origin:0 0;">Note</div>
<div class="a" style="left:1220px;top:1277px;width:454px;height:104px;background:#fff;border:2px solid #dcdcdc;border-radius:6px"></div>
<div class="a" style="left:1220px;top:1395px;width:454px;height:102px;background:#fff;border:2px solid #dcdcdc;"></div>
<div class="a" style="left:1620px;top:1395px;width:2px;height:102px;background:#dcdcdc"></div>
<svg class="ic" style="left:1638px;top:1442px;width:19px;height:9px" viewBox="7 10 10 5" preserveAspectRatio="none"><path fill="#3a3a3a" d="M7,10L12,15L17,10H7Z"/></svg>
<div class="a" style="left:1220px;top:1512px;width:350px;height:103px;background:#fff;border:2px solid #dcdcdc;"></div>
<svg class="ic" style="left:1586px;top:1529px;width:21px;height:21px" viewBox="3 3 18 18" preserveAspectRatio="none"><path fill="#a6a6a6" d="M14,3V5H17.59L7.76,14.83L9.17,16.24L19,6.41V10H21V3M19,19H5V5H12V3H5C3.89,3 3,3.9 3,5V19A2,2 0 0,0 5,21H19A2,2 0 0,0 21,19V12H19V19Z"/></svg>
<svg class="ic" style="left:1638px;top:1528px;width:20px;height:22px" viewBox="3 1 18 20" preserveAspectRatio="none"><path fill="#a6a6a6" d="M19,3H14.82C14.4,1.84 13.3,1 12,1C10.7,1 9.6,1.84 9.18,3H5A2,2 0 0,0 3,5V19A2,2 0 0,0 5,21H19A2,2 0 0,0 21,19V5A2,2 0 0,0 19,3M12,3A1,1 0 0,1 13,4A1,1 0 0,1 12,5A1,1 0 0,1 11,4A1,1 0 0,1 12,3M7,12H10V8H14V12H17L12,17L7,12Z"/></svg>
<div class="a" style="left:1220px;top:1630px;width:454px;height:105px;background:#fff;border:2px solid #dcdcdc;border-radius:6px"></div>
<div class="t" style="left:624.5px;top:1666.3px;font-size:26.09px;color:#383838;transform:scaleX(0.9530);transform-origin:0 0;">New York</div>
<div class="a" style="left:1726px;top:1266px;width:2px;height:466px;background:#dcdcdc"></div>
<div class="t" style="left:1743.6px;top:1282.4px;font-size:32px;color:#000"><b>Book</b> (AcemogluandRobinson2012)</div>
<div class="t" style="left:1743.6px;top:1354.2px;font-size:32px;color:#000">Acemoglu, Daron / Robinson, James</div>
<div class="t" style="left:1743.6px;top:1390.1px;font-size:32px;color:#000;font-weight:bold">Why Nations Fail: The Origins of Power, Prosperity and Poverty</div>
<div class="t" style="left:1743.6px;top:1426.6px;font-size:32px;color:#000">2012</div>
<div class="t" style="left:1743.6px;top:1498.4px;font-size:32px;color:#000">Crown: New York</div>
<div class="a" style="left:1014px;top:620px;width:952px;height:563px;background:#fff;border-radius:18px;box-shadow:0 30px 55px 0 rgba(0,0,0,0.31),0 22px 120px 0 rgba(0,0,0,0.10),0 0 0 1px rgba(0,0,0,0.2);overflow:hidden"></div>
<div class="a" style="left:1014px;top:620px;width:952px;height:57px;background:#efefef;border-radius:18px 18px 0 0;border-bottom:1px solid #d4d4d4"></div>
<div class="a" style="left:1030px;top:636px;width:24px;height:24px;border-radius:50%;background:#ec2d27;border:1px solid #c8302b"></div>
<div class="a" style="left:1070px;top:636px;width:24px;height:24px;border-radius:50%;background:#d5d5d5;border:1px solid #b8b8b8"></div>
<div class="a" style="left:1110px;top:636px;width:24px;height:24px;border-radius:50%;background:#62c354;border:1px solid #55a84a"></div>
<svg class="ic" style="left:1357px;top:631px;width:30px;height:30px" viewBox="0 0 100 100" preserveAspectRatio="none"><g fill="#b3bad0"><path d="M2,21 Q30,25 46,47 L46,79 L0,99 L1,63 L19,58 Q22,47 3,43 Z"/><path d="M8,8 Q32,13 46,36 L46,44 Q30,22 7,15 Z"/><path d="M16,1 Q36,5 46,20 L46,26 Q33,11 16,5 Z"/><g transform="translate(100,0) scale(-1,1)"><path d="M2,21 Q30,25 46,47 L46,79 L0,99 L1,63 L19,58 Q22,47 3,43 Z"/><path d="M8,8 Q32,13 46,36 L46,44 Q30,22 7,15 Z"/><path d="M16,1 Q36,5 46,20 L46,26 Q33,11 16,5 Z"/></g></g></svg>
<div class="t" style="left:1397.0px;top:630.0px;font-size:28.26px;color:#454545;font-weight:bold;transform:scaleX(0.9719);transform-origin:0 0;">Select entry type</div>
<div class="a" style="left:1036px;top:698px;width:908px;height:53px;background:#f0f1f1;border:2px solid #cfcfcf;border-bottom:3px solid #c4c4c4;border-radius:4px 4px 0 0;box-shadow:inset 2px 2px 0 #fbfbfb"></div>
<div class="t" style="left:1057.5px;top:710.4px;font-size:25.94px;color:#333;transform:scaleX(0.9378);transform-origin:0 0;">Recommended</div>
<div class="a" style="left:1036px;top:751px;width:908px;height:109px;background:#f3f3f3;border:2px solid #d6d6d6;border-top:none;box-shadow:inset 0 4px 4px -2px rgba(0,0,0,0.05)"></div>
<div class="a" style="left:1060px;top:772px;width:124px;height:62px;background:#f3f3f3;border:2px solid #dedede;border-radius:8px"></div>
<div class="t" style="left:1088.0px;top:789.7px;font-size:25.94px;color:#333;transform:scaleX(0.9535);transform-origin:0 0;">Article</div>
<div class="a" style="left:1186px;top:772px;width:110px;height:62px;background:#f3f3f3;border:2px solid #dedede;border-radius:8px"></div>
<div class="t" style="left:1214.8px;top:789.7px;font-size:25.94px;color:#333;transform:scaleX(0.9103);transform-origin:0 0;">Book</div>
<div class="a" style="left:1298px;top:772px;width:210px;height:62px;background:#f3f3f3;border:2px solid #dedede;border-radius:8px"></div>
<div class="t" style="left:1326.6px;top:789.7px;font-size:25.94px;color:#333;transform:scaleX(0.9304);transform-origin:0 0;">InProceedings</div>
<div class="a" style="left:1510px;top:772px;width:183px;height:62px;background:#f3f3f3;border:2px solid #dedede;border-radius:8px"></div>
<div class="t" style="left:1538.6px;top:789.7px;font-size:25.94px;color:#333;transform:scaleX(0.9541);transform-origin:0 0;">TechReport</div>
<div class="a" style="left:1695px;top:772px;width:107px;height:62px;background:#f3f3f3;border:2px solid #dedede;border-radius:8px"></div>
<div class="t" style="left:1723.3px;top:789.7px;font-size:25.94px;color:#333;transform:scaleX(0.9585);transform-origin:0 0;">Misc</div>
<div class="a" style="left:1036px;top:859px;width:908px;height:51px;background:#f0f1f1;border:2px solid #cfcfcf;border-radius:4px"></div>
<svg class="ic" style="left:1073px;top:875px;width:13px;height:18px" viewBox="10 7 5 10" preserveAspectRatio="none"><path fill="#333" d="M10,17L15,12L10,7V17Z"/></svg>
<div class="t" style="left:1090.4px;top:871.1px;font-size:25.51px;color:#333;transform:scaleX(0.9527);transform-origin:0 0;">Others</div>
<div class="t" style="left:1223.0px;top:928.3px;font-size:24.35px;color:#333;transform:scaleX(0.9906);transform-origin:0 0;">ID type</div>
<div class="t" style="left:1223.0px;top:986.9px;font-size:25.51px;color:#333;transform:scaleX(0.8743);transform-origin:0 0;">ID</div>
<div class="a" style="left:1466px;top:911px;width:291px;height:58px;background:#fff;border:2px solid #d8d8d8"></div>
<div class="t" style="left:1484.7px;top:927.4px;font-size:25.36px;color:#333;transform:scaleX(0.8939);transform-origin:0 0;">DOI</div>
<svg class="ic" style="left:1723px;top:936px;width:18px;height:9px" viewBox="7 10 10 5" preserveAspectRatio="none"><path fill="#333" d="M7,10L12,15L17,10H7Z"/></svg>
<div class="a" style="left:1466px;top:971px;width:291px;height:58px;background:#fff;border:3px solid #9fb3e3;border-radius:6px"></div>
<div class="a" style="left:1455px;top:1098px;width:209px;height:64px;background:#fff;border:2px solid #d6d6d6;border-radius:9px"></div>
<div class="t" style="left:1522.1px;top:1116.2px;font-size:26.96px;color:#333;transform:scaleX(0.8951);transform-origin:0 0;">Cancel</div>
<div class="a" style="left:1684px;top:1098px;width:260px;height:64px;background:#eef0f0;border-radius:9px"></div>
<div class="t" style="left:1765.4px;top:1116.2px;font-size:26.96px;color:#a9b1c6;transform:scaleX(0.8905);transform-origin:0 0;">Generate</div>
<svg class="ic" style="left:1020px;top:830px;width:300px;height:125px" viewBox="0 0 300 125"><ellipse cx="145.5" cy="62" rx="134" ry="51.5" fill="none" stroke="#f20c0c" stroke-width="9"/></svg>
<div class="a" style="left:0px;top:1672px;width:2978px;height:60px;background:linear-gradient(to bottom,rgba(0,0,0,0),rgba(0,0,0,0.035))"></div>
</body></html>
